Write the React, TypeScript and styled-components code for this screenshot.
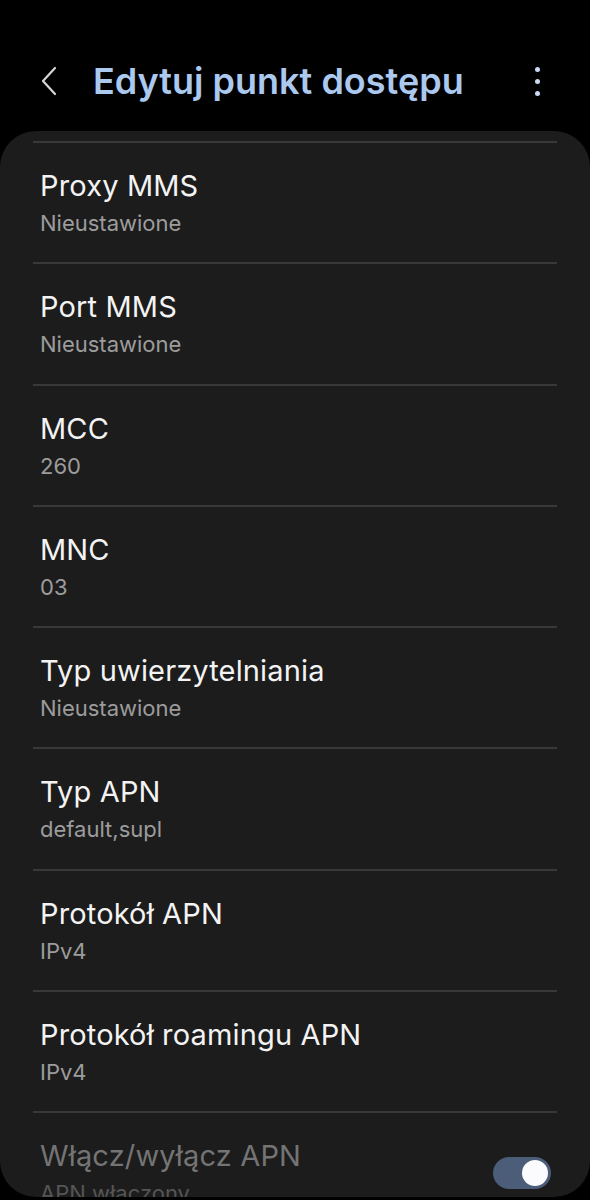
import React from "react";
import styled, { createGlobalStyle } from "styled-components";

const GlobalStyle = createGlobalStyle`
  html, body {
    margin: 0;
    padding: 0;
    background: #000;
  }
  body {
    font-family: Inter, Roboto, "Noto Sans", Arial, sans-serif;
    -webkit-font-smoothing: antialiased;
  }
`;

const Screen = styled.div`
  width: 590px;
  height: 1200px;
  background: #000;
  display: flex;
  flex-direction: column;
  overflow: hidden;
`;

const Header = styled.header`
  height: 131px;
  box-sizing: border-box;
  padding: 59px 0 0 0;
  display: flex;
  align-items: flex-start;
`;

const BackButton = styled.button`
  width: 93px;
  height: 44px;
  border: 0;
  background: transparent;
  padding: 0 0 0 40px;
  display: flex;
  align-items: center;
  cursor: pointer;
`;

const Title = styled.h1`
  margin: 0;
  flex: 1;
  font-size: 36px;
  line-height: 44px;
  font-weight: 600;
  color: #abc8ee;
  letter-spacing: 0px;
  white-space: nowrap;
`;

const MenuButton = styled.button`
  width: 40px;
  height: 44px;
  margin-right: 33px;
  border: 0;
  background: transparent;
  padding: 0;
  display: flex;
  flex-direction: column;
  align-items: center;
  justify-content: center;
  gap: 7px;
`;

const Dot = styled.span`
  width: 5px;
  height: 5px;
  border-radius: 50%;
  background: #c9d9f1;
`;

const Card = styled.main`
  height: 1066px;
  background: #1c1c1c;
  border-radius: 36px;
  overflow: hidden;
  padding-top: 10px;
  box-sizing: border-box;
`;

const Row = styled.div`
  margin: 0 33px;
  border-top: 2px solid #383838;
  padding: 25px 6px 25.25px 7px;
  display: flex;
  align-items: center;
  gap: 16px;
`;

const TextCol = styled.div`
  flex: 1;
  display: flex;
  flex-direction: column;
  min-width: 0;
`;

const RowTitle = styled.div<{ $disabled?: boolean }>`
  font-size: 29px;
  line-height: 36px;
  color: ${(p) => (p.$disabled ? "#747474" : "#f3f3f3")};
  letter-spacing: 0.15px;
`;

const RowValue = styled.div<{ $disabled?: boolean }>`
  margin-top: 5px;
  font-size: 22px;
  line-height: 28px;
  color: ${(p) => (p.$disabled ? "#555555" : "#9c9c9c")};
`;

const Track = styled.div<{ $on: boolean }>`
  width: 58px;
  height: 32px;
  border-radius: 16px;
  background: #4b5d79;
  box-sizing: border-box;
  padding: 3px;
  display: flex;
  justify-content: ${(p) => (p.$on ? "flex-end" : "flex-start")};
  flex-shrink: 0;
`;

const Thumb = styled.div`
  width: 26px;
  height: 26px;
  border-radius: 50%;
  background: #fbfbfd;
`;

const items: { title: string; value: string }[] = [
  { title: "Proxy MMS", value: "Nieustawione" },
  { title: "Port MMS", value: "Nieustawione" },
  { title: "MCC", value: "260" },
  { title: "MNC", value: "03" },
  { title: "Typ uwierzytelniania", value: "Nieustawione" },
  { title: "Typ APN", value: "default,supl" },
  { title: "Protokół APN", value: "IPv4" },
  { title: "Protokół roamingu APN", value: "IPv4" },
];

export default function App() {
  return (
    <>
      <GlobalStyle />
      <Screen>
        <Header>
          <BackButton aria-label="Wstecz">
            <svg width="18" height="30" viewBox="0 0 18 30" fill="none">
              <polyline
                points="15,2 3,15 15,28"
                stroke="#d6d6d6"
                strokeWidth="2.2"
                strokeLinecap="round"
                strokeLinejoin="round"
              />
            </svg>
          </BackButton>
          <Title>Edytuj punkt dostępu</Title>
          <MenuButton aria-label="Więcej opcji">
            <Dot />
            <Dot />
            <Dot />
          </MenuButton>
        </Header>
        <Card>
          {items.map((it) => (
            <Row key={it.title}>
              <TextCol>
                <RowTitle>{it.title}</RowTitle>
                <RowValue>{it.value}</RowValue>
              </TextCol>
            </Row>
          ))}
          <Row>
            <TextCol>
              <RowTitle $disabled>Włącz/wyłącz APN</RowTitle>
              <RowValue $disabled>APN włączony.</RowValue>
            </TextCol>
            <Track $on>
              <Thumb />
            </Track>
          </Row>
        </Card>
      </Screen>
    </>
  );
}
